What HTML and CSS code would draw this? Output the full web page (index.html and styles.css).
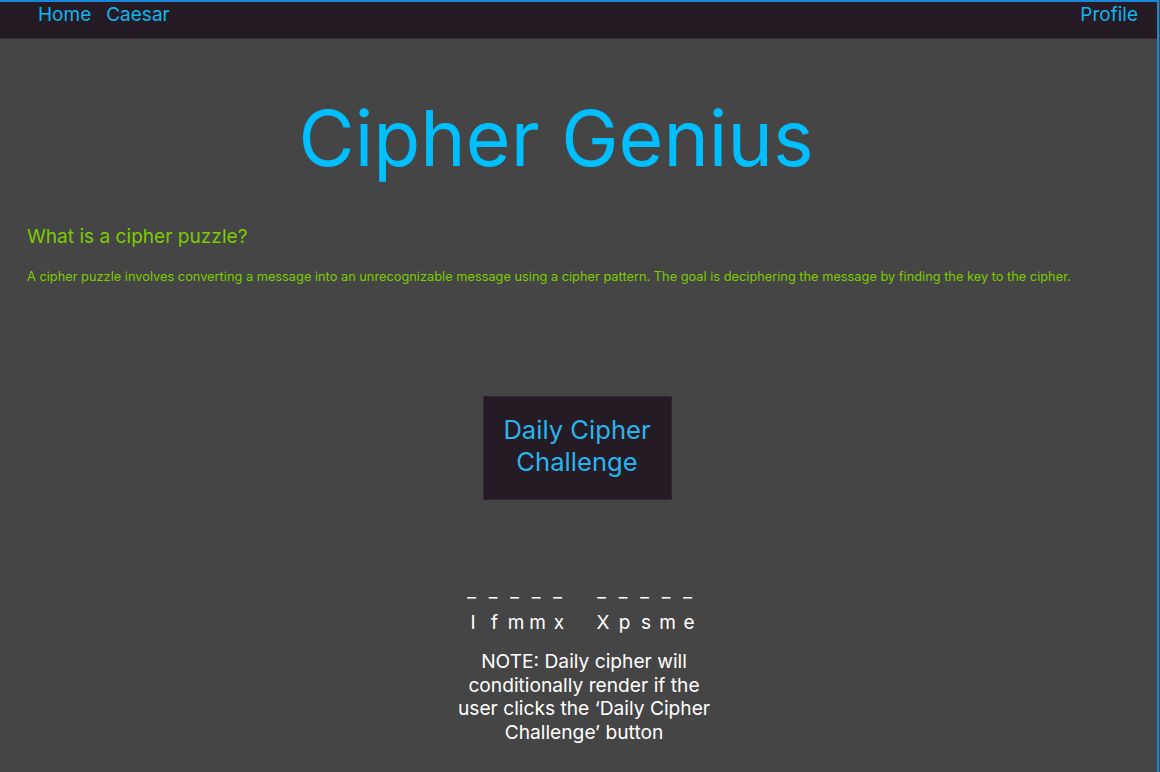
FILE: index.html
```html
<!DOCTYPE html>
<html lang="en">
<head>
<meta charset="utf-8">
<title>Cipher Genius</title>
<link rel="stylesheet" href="styles.css">
</head>
<body>
<div class="frame">
  <nav class="nav">
    <div class="nav-left">
      <a class="nav-link" href="#">Home</a>
      <a class="nav-link" href="#">Caesar</a>
    </div>
    <a class="nav-link" href="#">Profile</a>
  </nav>
  <main class="main">
    <h1 class="title">Cipher Genius</h1>
    <section class="intro">
      <h2 class="intro-heading">What is a cipher puzzle?</h2>
      <p class="intro-text">A cipher puzzle involves converting a message into an unrecognizable message using a cipher pattern. The goal is deciphering the message by finding the key to the cipher.</p>
    </section>
    <div class="btn-wrap">
      <button class="daily-btn">Daily Cipher<br>Challenge</button>
    </div>
    <section class="daily">
      <div class="words">
        <div class="word">
          <span class="blank">_</span><span class="blank">_</span><span class="blank">_</span><span class="blank">_</span><span class="blank">_</span>
          <span class="letter">I</span><span class="letter">f</span><span class="letter">m</span><span class="letter">m</span><span class="letter">x</span>
        </div>
        <div class="word">
          <span class="blank">_</span><span class="blank">_</span><span class="blank">_</span><span class="blank">_</span><span class="blank">_</span>
          <span class="letter">X</span><span class="letter">p</span><span class="letter">s</span><span class="letter">m</span><span class="letter">e</span>
        </div>
      </div>
      <p class="note">NOTE: Daily cipher will conditionally render if the user clicks the ‘Daily Cipher Challenge’ button</p>
    </section>
  </main>
</div>
</body>
</html>
```

FILE: styles.css
```css
html, body {
  margin: 0;
  padding: 0;
  height: 100%;
}
body {
  background: #454545;
  font-family: Inter, "Noto Sans", sans-serif;
}
.frame {
  height: 772px;
  box-sizing: border-box;
  border-top: 2px solid #1a86d9;
  border-right: 2px solid #1a86d9;
  margin-right: 1px;
  background: #454545;
  display: flex;
  flex-direction: column;
}
.nav {
  height: 35px;
  background: #241b24;
  border-bottom: 1px solid #2e2a2e;
  display: flex;
  justify-content: space-between;
  align-items: flex-start;
  padding: 1px 19px 0 38px;
  box-sizing: content-box;
}
.nav-left {
  display: flex;
  gap: 15px;
}
.nav-link {
  color: #12b5f0;
  text-decoration: none;
  font-size: 19px;
  line-height: 24px;
}
.main {
  flex: 1;
  display: flex;
  flex-direction: column;
}
.title {
  margin: 52px 0 0;
  text-align: center;
  font-weight: 400;
  font-size: 76.9px;
  line-height: 96px;
  color: #00bfff;
  padding-right: 45px;
}
.intro {
  padding: 0 27px;
  margin-top: 37px;
}
.intro-heading {
  margin: 0;
  font-weight: 400;
  font-size: 19.1px;
  line-height: 24px;
  color: #7ccc00;
}
.intro-text {
  margin: 21px 0 0;
  font-size: 12.8px;
  line-height: 16px;
  color: #7ccc00;
}
.btn-wrap {
  display: flex;
  justify-content: center;
  margin-top: 111px;
  padding-right: 3px;
}
.daily-btn {
  width: 189px;
  height: 104px;
  background: #241b24;
  border: 1px solid #2f292f;
  color: #2ab4ee;
  font-family: Inter, "Noto Sans", sans-serif;
  font-size: 25.6px;
  line-height: 32px;
  padding: 0 0 4px;
}
.daily {
  margin-top: 80px;
  display: flex;
  flex-direction: column;
  align-items: center;
  padding-left: 2px;
  color: #ffffff;
}
.words {
  display: flex;
  gap: 22.5px;
}
.word {
  display: grid;
  grid-template-columns: repeat(5, 21.5px);
  grid-template-rows: 22px 22px;
  row-gap: 10px;
  font-size: 19px;
  line-height: 22px;
}
.blank,
.letter {
  text-align: center;
}
.letter {
  padding-left: 3px;
}
.note {
  margin: 16px 0 0 9px;
  width: 256px;
  text-align: center;
  font-size: 19.2px;
  line-height: 23.5px;
}
```
